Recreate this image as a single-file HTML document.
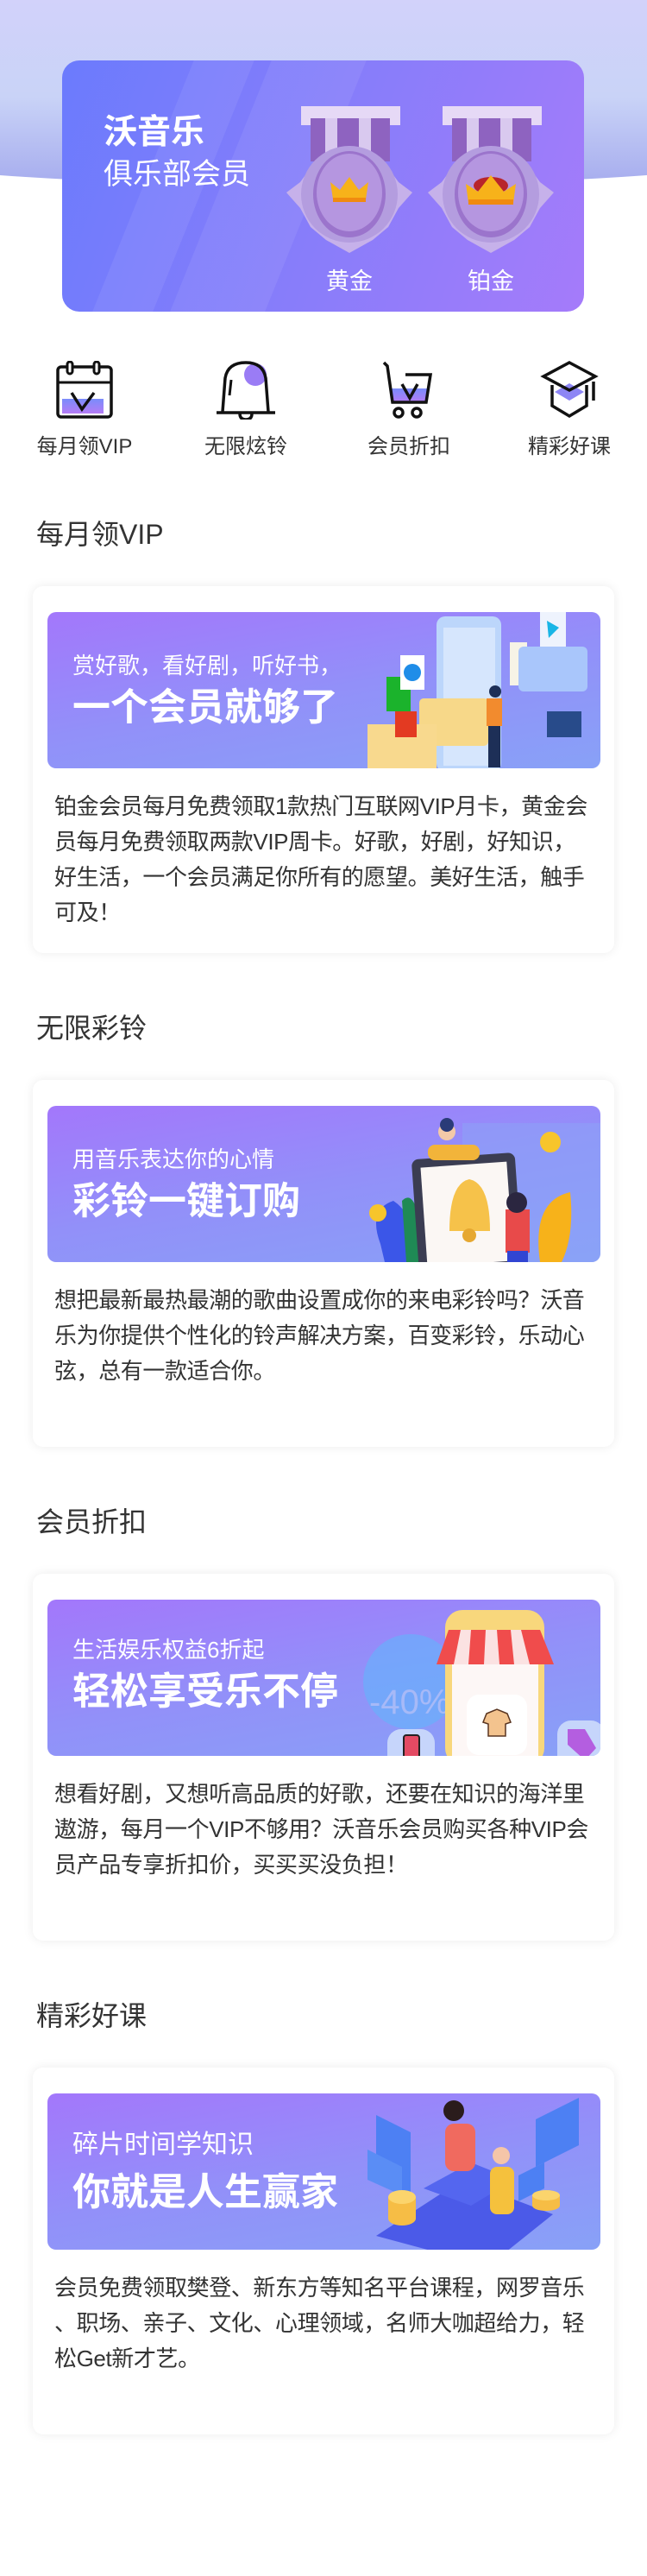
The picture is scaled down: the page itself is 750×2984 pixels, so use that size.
<!DOCTYPE html>
<html><head><meta charset="utf-8">
<style>
*{margin:0;padding:0;box-sizing:border-box}
body{width:750px;height:2984px;background:#fff;position:relative;overflow:hidden;font-family:"Liberation Sans","Noto Sans CJK SC",sans-serif;color:#333}
.wave{position:absolute;left:-250px;top:-300px;width:1250px;height:515px;border-radius:0 0 50% 50%/0 0 60px 60px;background:linear-gradient(180deg,#d7cdfb 0%,#d3d2fb 55%,#c9d3f7 80%,#a6acee 100%);overflow:hidden}
.hero{position:absolute;left:72px;top:70px;width:605px;height:291px;border-radius:20px;background:linear-gradient(110deg,#6b7bfd 0%,#8a7dfa 55%,#a57bfa 100%);overflow:hidden}
.hero .stripe{position:absolute;top:-20px;height:400px;width:70px;background:rgba(255,255,255,.07);transform:skewX(-22deg)}
.hero h1{position:absolute;left:48px;top:62px;font-size:39px;color:#fff;font-weight:bold;line-height:44px}
.hero h2{position:absolute;left:48px;top:110px;font-size:34px;color:#fff;font-weight:normal;line-height:44px}
.medal{position:absolute;top:53px;width:146px;height:170px}
.mlabel{position:absolute;top:234px;font-size:27px;color:#fff;width:80px;text-align:center}
.icons{position:absolute;top:418px;left:0;width:750px}
.ic{position:absolute;width:160px;text-align:center}
.ic svg{display:block;margin:0 auto}
.ic span{display:block;font-size:24px;color:#333;margin-top:17px;line-height:30px}
.sec{position:absolute;left:0;width:750px}
.sec h3{position:absolute;left:42px;top:-78px;font-size:32px;font-weight:normal;color:#333;line-height:36px}
.card{position:absolute;left:38px;top:0;width:674px;height:425px;border-radius:12px;background:#fff;box-shadow:0 0 12px rgba(0,0,0,.08)}
.banner{position:absolute;left:17px;top:30px;width:641px;height:181px;border-radius:10px;background:linear-gradient(170deg,#a377fb 0%,#9290f9 50%,#88a1f7 100%);overflow:hidden}
.banner .t1{position:absolute;left:29px;top:47px;font-size:26px;color:#fff;line-height:30px;white-space:nowrap}
.banner .t2{position:absolute;left:29px;top:86px;font-size:44px;font-weight:bold;color:#fff;line-height:50px;white-space:nowrap}
.banner svg{position:absolute;right:0;top:0}
.card p{position:absolute;left:25px;top:235px;width:640px;font-size:26px;line-height:41px;color:#333;letter-spacing:-0.4px}
.card p span{display:block;white-space:nowrap}
</style></head><body>
<div class="wave"></div>
<div class="hero">
 <div class="stripe" style="left:80px"></div><div class="stripe" style="left:170px;width:110px"></div>
 <h1>沃音乐</h1><h2>俱乐部会员</h2>
 <svg class="medal" style="left:260px" viewBox="0 0 146 170">
  <rect x="17" y="0" width="115" height="22" fill="#e6d9f6"/><rect x="28" y="14" width="92" height="50" fill="#8e63c0"/>
  <rect x="45" y="14" width="14" height="56" fill="#d9c9ef"/><rect x="84" y="14" width="14" height="56" fill="#d9c9ef"/>
  <polygon points="73,46 96,52 114,66 130,88 146,100 130,118 118,140 100,155 73,170 46,155 28,140 16,118 0,100 16,88 32,66 50,52" fill="#c6b1ea"/>
  <circle cx="73" cy="102" r="56" fill="#b49ddf"/><ellipse cx="73" cy="102" rx="42" ry="50" fill="#9b74cc"/><ellipse cx="73" cy="100" rx="38" ry="45" fill="#b596e0"/>
  <path d="M54 108 L51 88 L62 97 L73 82 L84 97 L95 88 L92 108 Z" fill="#f7b21a"/><rect x="54" y="106" width="38" height="5" fill="#f08a10"/>
 </svg>
 <svg class="medal" style="left:424px" viewBox="0 0 146 170">
  <rect x="17" y="0" width="115" height="22" fill="#e6d9f6"/><rect x="28" y="14" width="92" height="50" fill="#8e63c0"/>
  <rect x="45" y="14" width="14" height="56" fill="#d9c9ef"/><rect x="84" y="14" width="14" height="56" fill="#d9c9ef"/>
  <polygon points="73,46 96,52 114,66 130,88 146,100 130,118 118,140 100,155 73,170 46,155 28,140 16,118 0,100 16,88 32,66 50,52" fill="#c6b1ea"/>
  <circle cx="73" cy="102" r="56" fill="#b49ddf"/><ellipse cx="73" cy="102" rx="42" ry="50" fill="#9b74cc"/><ellipse cx="73" cy="100" rx="38" ry="45" fill="#b596e0"/>
  <ellipse cx="73" cy="92" rx="20" ry="10" fill="#b8242b"/>
  <path d="M47 112 L44 90 L58 99 L73 80 L88 99 L102 90 L99 112 Z" fill="#f7b21a"/><rect x="47" y="108" width="52" height="6" fill="#f08a10"/>
 </svg>
 <div class="mlabel" style="left:293px">黄金</div><div class="mlabel" style="left:457px">铂金</div>
</div>

<div class="icons">
 <div class="ic" style="left:18px">
  <svg width="70" height="68" viewBox="0 0 70 68"><defs><linearGradient id="g1" x1="0" y1="0" x2="0" y2="1"><stop offset="0" stop-color="#7a8cfb"/><stop offset="1" stop-color="#b47cf6"/></linearGradient></defs>
  <rect x="9" y="44" width="48" height="17" fill="url(#g1)"/>
  <rect x="4" y="7" width="62" height="58" rx="4" fill="none" stroke="#111" stroke-width="3.5"/><line x1="4" y1="25" x2="66" y2="25" stroke="#111" stroke-width="3"/>
  <rect x="15" y="1" width="6" height="14" rx="3" fill="#fff" stroke="#111" stroke-width="3"/><rect x="46" y="1" width="6" height="14" rx="3" fill="#fff" stroke="#111" stroke-width="3"/>
  <path d="M20 37 L32 56 L46 37" fill="none" stroke="#111" stroke-width="3.5"/></svg>
  <span>每月领VIP</span></div>
 <div class="ic" style="left:205px">
  <svg width="70" height="68" viewBox="0 0 70 68"><circle cx="46" cy="16" r="13" fill="#9a7cf5"/>
  <path d="M8 59 L11 20 Q14 2 35 2 Q55 2 58 20 L61 59" fill="none" stroke="#111" stroke-width="3.5"/><path d="M16 40 L18 22" stroke="#111" stroke-width="3"/>
  <line x1="1" y1="60" x2="69" y2="60" stroke="#111" stroke-width="3.5"/><path d="M28 61 Q28 68 35 68 Q42 68 42 61" fill="none" stroke="#111" stroke-width="3.5"/></svg>
  <span>无限炫铃</span></div>
 <div class="ic" style="left:394px">
  <svg width="70" height="68" viewBox="0 0 70 68"><defs><linearGradient id="g2" x1="0" y1="0" x2="0" y2="1"><stop offset="0" stop-color="#7a8cfb"/><stop offset="1" stop-color="#b47cf6"/></linearGradient></defs>
  <path d="M14 32 L58 32 L55 48 L17 48 Z" fill="url(#g2)"/>
  <path d="M6 2 L10 6 L16 48 L55 48 L60 16 L31 16" fill="none" stroke="#111" stroke-width="3.5"/><path d="M27 27 L36 43 L45 27" fill="none" stroke="#111" stroke-width="3.5"/>
  <circle cx="23" cy="60" r="5" fill="none" stroke="#111" stroke-width="3.5"/><circle cx="44" cy="60" r="5" fill="none" stroke="#111" stroke-width="3.5"/></svg>
  <span>会员折扣</span></div>
 <div class="ic" style="left:580px">
  <svg width="70" height="68" viewBox="0 0 70 68"><path d="M18 36 L35 26 L52 36 L35 46 Z" fill="#8d86f5"/>
  <path d="M35 2 L65 18 L35 34 L5 18 Z" fill="none" stroke="#111" stroke-width="3.5"/><path d="M15 28 L15 52 L35 64 L55 52 L55 28" fill="none" stroke="#111" stroke-width="3.5"/>
  <line x1="63" y1="24" x2="63" y2="46" stroke="#111" stroke-width="3.5"/></svg>
  <span>精彩好课</span></div>
</div>

<div class="sec" style="top:679px"><h3>每月领VIP</h3><div class="card">
 <div class="banner"><div class="t1">赏好歌，看好剧，听好书，</div><div class="t2">一个会员就够了</div>
  <svg width="300" height="181" viewBox="0 0 300 181">
   <rect x="110" y="5" width="75" height="180" rx="10" fill="#bcd6fb"/><rect x="118" y="18" width="60" height="160" fill="#d6e6fd"/>
   <rect x="90" y="100" width="80" height="55" rx="5" fill="#f7d889"/><rect x="30" y="130" width="80" height="60" fill="#f8d98e"/>
   <rect x="52" y="75" width="28" height="40" fill="#1bb32c"/><rect x="68" y="50" width="28" height="40" fill="#fff"/><circle cx="82" cy="70" r="10" fill="#1f8de8"/>
   <rect x="62" y="115" width="25" height="30" fill="#e33a22"/><rect x="230" y="0" width="30" height="40" fill="#eef3fd"/><path d="M238 10 L252 18 L240 30 Z" fill="#19b5e6"/>
   <rect x="195" y="35" width="20" height="50" fill="#f6f3e6"/><rect x="205" y="40" width="80" height="52" rx="6" fill="#a9c6fb"/>
   <rect x="238" y="115" width="40" height="30" fill="#284b8a"/><rect x="170" y="130" width="14" height="50" fill="#1d2f57"/><rect x="168" y="100" width="18" height="32" fill="#f28b2e"/><circle cx="178" cy="92" r="7" fill="#1d2f57"/>
  </svg></div>
 <p><span>铂金会员每月免费领取1款热门互联网VIP月卡，黄金会</span><span>员每月免费领取两款VIP周卡。好歌，好剧，好知识，</span><span>好生活，一个会员满足你所有的愿望。美好生活，触手</span><span>可及！</span></p></div></div>

<div class="sec" style="top:1251px"><h3>无限彩铃</h3><div class="card">
 <div class="banner"><div class="t1">用音乐表达你的心情</div><div class="t2">彩铃一键订购</div>
  <svg width="300" height="181" viewBox="0 0 300 181">
   <rect x="140" y="20" width="160" height="161" fill="#8ba3f8" opacity=".5"/>
   <path d="M45 160 Q30 120 60 110 Q90 130 80 181 L50 181 Z" fill="#3b56e8"/><path d="M70 110 Q90 90 95 181 L75 181Z" fill="#1f8a55"/>
   <rect x="85" y="58" width="120" height="130" rx="8" fill="#3b3d52" transform="rotate(-4 145 120)"/><rect x="95" y="68" width="100" height="115" fill="#fbf7f4" transform="rotate(-4 145 120)"/>
   <path d="M125 145 Q125 90 148 85 Q172 90 172 145 Z" fill="#f6c24a"/><circle cx="148" cy="150" r="8" fill="#e6a831"/>
   <path d="M230 181 Q220 110 265 100 Q270 150 255 181Z" fill="#f7b21a"/>
   <rect x="190" y="120" width="28" height="50" fill="#e84a4a"/><rect x="192" y="168" width="24" height="15" fill="#3145d3"/><circle cx="203" cy="112" r="12" fill="#2b2640"/>
   <rect x="100" y="45" width="60" height="18" rx="8" fill="#f2b43a"/><circle cx="122" cy="30" r="10" fill="#f3c9a8"/><circle cx="122" cy="22" r="8" fill="#2a3b78"/>
   <circle cx="242" cy="42" r="12" fill="#f7c52b"/><circle cx="42" cy="124" r="10" fill="#f7c52b"/>
  </svg></div>
 <p><span>想把最新最热最潮的歌曲设置成你的来电彩铃吗？沃音</span><span>乐为你提供个性化的铃声解决方案，百变彩铃，乐动心</span><span>弦，总有一款适合你。</span></p></div></div>

<div class="sec" style="top:1823px"><h3>会员折扣</h3><div class="card">
 <div class="banner"><div class="t1" style="top:43px">生活娱乐权益6折起</div><div class="t2" style="top:82px">轻松享受乐不停</div>
  <svg width="300" height="181" viewBox="0 0 300 181">
   <circle cx="80" cy="95" r="55" fill="#62b4fb" opacity=".6"/>
   <text x="32" y="132" font-size="40" fill="#c9c6f6" opacity=".6" font-family="Liberation Sans">-40%</text>
   <rect x="120" y="12" width="115" height="180" rx="20" fill="#f8d77c"/><rect x="128" y="60" width="100" height="125" fill="#fdf7f6"/>
   <path d="M110 75 L124 35 L230 35 L246 75 Z" fill="#f04c4c"/><path d="M130 75 L138 35 L150 35 L147 75 ZM165 75 L167 35 L180 35 L183 75 ZM200 75 L196 35 L208 35 L218 75 Z" fill="#fbe2e2"/>
   <rect x="145" y="110" width="70" height="70" rx="14" fill="#fff"/><path d="M168 132 L180 127 L192 132 L196 142 L190 144 L190 158 L170 158 L170 144 L164 142 Z" fill="#f3c38e" stroke="#5a3520" stroke-width="1.5"/>
   <rect x="53" y="150" width="55" height="70" rx="16" fill="#c6d5fb"/><rect x="72" y="157" width="18" height="55" rx="3" fill="#e34a63" stroke="#222" stroke-width="2"/>
   <rect x="250" y="140" width="55" height="70" rx="16" fill="#c6d5fb"/><path d="M262 150 L282 150 L295 172 L282 186 L262 168 Z" fill="#b45ee0"/>
  </svg></div>
 <p><span>想看好剧，又想听高品质的好歌，还要在知识的海洋里</span><span>遨游，每月一个VIP不够用？沃音乐会员购买各种VIP会</span><span>员产品专享折扣价，买买买没负担！</span></p></div></div>

<div class="sec" style="top:2395px"><h3>精彩好课</h3><div class="card">
 <div class="banner"><div class="t1" style="top:45px;font-size:30px">碎片时间学知识</div><div class="t2" style="top:90px">你就是人生赢家</div>
  <svg width="300" height="181" viewBox="0 0 300 181">
   <path d="M40 165 L140 100 L245 140 L170 200 Z" fill="#4b5ae8"/><path d="M95 110 L150 80 L200 100 L150 130 Z" fill="#5466ef"/>
   <path d="M40 25 L80 45 L80 120 L40 100 Z" fill="#4d80f3"/><path d="M30 65 L70 85 L70 118 L30 100Z" fill="#5a8df5"/>
   <path d="M225 30 L275 5 L275 60 L225 85 Z" fill="#4d80f3"/><path d="M205 95 L235 80 L235 110 L205 125Z" fill="#4d80f3"/>
   <rect x="120" y="35" width="35" height="55" rx="10" fill="#f06a5f"/><circle cx="130" cy="20" r="12" fill="#2a1c1c"/>
   <rect x="172" y="85" width="28" height="55" rx="8" fill="#f5c13d"/><circle cx="185" cy="72" r="10" fill="#f5c5a8"/>
   <ellipse cx="70" cy="145" rx="16" ry="8" fill="#f6bd45"/><rect x="54" y="120" width="32" height="25" fill="#f6bd45"/><ellipse cx="70" cy="120" rx="16" ry="8" fill="#fbd46c"/>
   <ellipse cx="237" cy="130" rx="16" ry="6" fill="#f6bd45"/><rect x="221" y="118" width="32" height="12" fill="#f6bd45"/><ellipse cx="237" cy="118" rx="16" ry="6" fill="#fbd46c"/>
  </svg></div>
 <p><span>会员免费领取樊登、新东方等知名平台课程，网罗音乐</span><span>、职场、亲子、文化、心理领域，名师大咖超给力，轻</span><span>松Get新才艺。</span></p></div></div>
</body></html>
